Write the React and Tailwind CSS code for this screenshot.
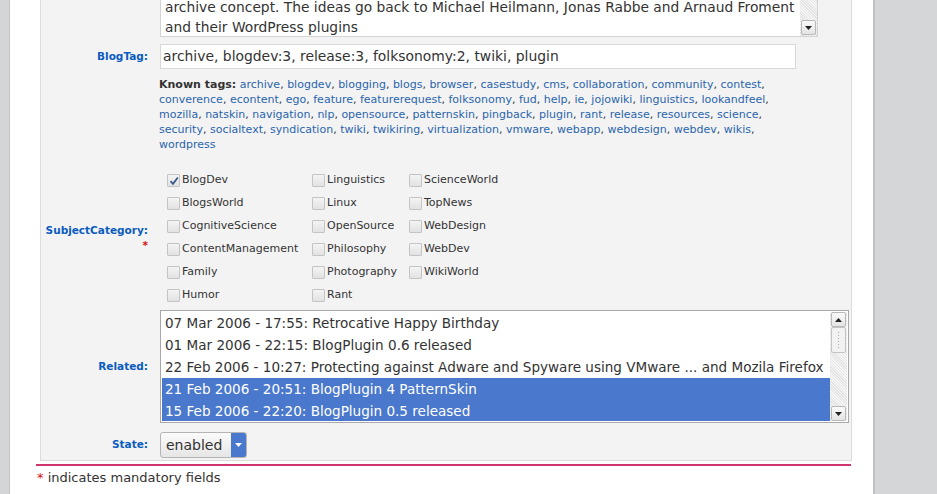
import React from "react";

const tags = [
  "archive", "blogdev", "blogging", "blogs", "browser", "casestudy", "cms", "collaboration", "community", "contest",
  "converence", "econtent", "ego", "feature", "featurerequest", "folksonomy", "fud", "help", "ie", "jojowiki", "linguistics", "lookandfeel",
  "mozilla", "natskin", "navigation", "nlp", "opensource", "patternskin", "pingback", "plugin", "rant", "release", "resources", "science",
  "security", "socialtext", "syndication", "twiki", "twikiring", "virtualization", "vmware", "webapp", "webdesign", "webdev", "wikis",
  "wordpress",
];

const categories = [
  ["BlogDev", "Linguistics", "ScienceWorld"],
  ["BlogsWorld", "Linux", "TopNews"],
  ["CognitiveScience", "OpenSource", "WebDesign"],
  ["ContentManagement", "Philosophy", "WebDev"],
  ["Family", "Photography", "WikiWorld"],
  ["Humor", "Rant", null],
];

const related = [
  { text: "07 Mar 2006 - 17:55: Retrocative Happy Birthday" },
  { text: "01 Mar 2006 - 22:15: BlogPlugin 0.6 released" },
  { text: "22 Feb 2006 - 10:27: Protecting against Adware and Spyware using VMware ... and Mozila Firefox" },
  { text: "21 Feb 2006 - 20:51: BlogPlugin 4 PatternSkin", sel: true },
  { text: "15 Feb 2006 - 22:20: BlogPlugin 0.5 released", sel: true },
];

const label = "text-right font-bold text-[10.5px] text-[#0a5cbf] pr-3 font-['DejaVu_Sans',sans-serif]";

function Checkbox({ checked }) {
  return (
    <span className="w-[13px] h-[13px] mr-[2px] border border-[#c4c4c4] rounded-[1px] bg-gradient-to-b from-[#f4f4f4] to-[#e2e2e2] flex items-center justify-center shrink-0">
      {checked && (
        <svg width="10" height="10" viewBox="0 0 10 10">
          <path d="M1.5 5.2 L4 7.8 L8.8 1.5" fill="none" stroke="#3a5a8c" strokeWidth="1.8" />
        </svg>
      )}
    </span>
  );
}

function ScrollArrow({ down }) {
  return (
    <div className="w-[15px] h-[15px] border border-[#b8b8b8] rounded-[2px] bg-gradient-to-b from-[#fafafa] to-[#e4e4e4] flex items-center justify-center">
      <svg width="7" height="4" viewBox="0 0 7 4">
        <path d={down ? "M0 0 L7 0 L3.5 4 Z" : "M0 4 L7 4 L3.5 0 Z"} fill="#222" />
      </svg>
    </div>
  );
}

export default function App() {
  return (
    <div className="w-[937px] h-[494px] overflow-hidden flex bg-white font-['DejaVu_Sans',sans-serif] text-[#333]">
      {/* left edge */}
      <div className="w-[10px] bg-[#d4d5d7] border-r border-[#c2c3c5]" />

      <div className="w-[863px] pl-[26px] pr-[21px] flex flex-col">
        <div className="ml-[4px] border border-t-0 border-[#dcdcdc] bg-[#f3f3f3] pb-[2px]">
          {/* textarea */}
          <div className="flex">
            <div className={`${label} w-[119px]`} />
            <div className="w-[658px] h-[37px] bg-white border border-t-0 border-[#d4d4d4] flex overflow-hidden">
              <div className="flex-1 pl-[4px] text-[13.8px] leading-[20px] -mt-[3px] whitespace-nowrap">
                <div>archive concept. The ideas go back to Michael Heilmann, Jonas Rabbe and Arnaud Froment</div>
                <div>and their WordPress plugins</div>
              </div>
              <div className="w-[17px] bg-[repeating-linear-gradient(45deg,#e4e4e4_0,#e4e4e4_1px,#f6f6f6_1px,#f6f6f6_2px)] flex flex-col justify-end items-center pb-[1px]">
                <ScrollArrow down />
              </div>
            </div>
          </div>

          {/* BlogTag */}
          <div className="flex items-center mt-[7px]">
            <div className={`${label} w-[119px]`}>BlogTag:</div>
            <div className="w-[636px] h-[25px] bg-white border border-[#d8d8d8] pl-[2px] text-[13.9px] leading-[23px] whitespace-nowrap">
              archive, blogdev:3, release:3, folksonomy:2, twiki, plugin
            </div>
          </div>

          {/* known tags */}
          <div className="flex mt-[8px]">
            <div className="w-[118px]" />
            <div className="w-[640px] text-[11px] leading-[15px]">
              <span className="font-bold text-[#333]">Known tags:</span>{" "}
              {tags.map((t, i) => (
                <span key={t}>
                  <a className="text-[#2a65ad]">{t}</a>
                  {i < tags.length - 1 ? ", " : ""}
                </span>
              ))}
            </div>
          </div>

          {/* SubjectCategory */}
          <div className="flex items-center mt-[17px]">
            <div className={`${label} w-[119px] leading-[15px]`}>
              <div>SubjectCategory:</div>
              <div className="text-[#d01010]">*</div>
            </div>
            <div className="pl-[7px] grid grid-cols-[145px_97px_100px] text-[11px]">
              {categories.flat().map((c, i) =>
                c ? (
                  <div key={i} className="h-[23px] flex items-center">
                    <Checkbox checked={c === "BlogDev"} />
                    <span>{c}</span>
                  </div>
                ) : (
                  <div key={i} />
                )
              )}
            </div>
          </div>

          {/* Related */}
          <div className="flex items-center mt-[3px]">
            <div className={`${label} w-[119px]`}>Related:</div>
            <div className="w-[689px] h-[113px] bg-white border border-[#a8a8a8] flex p-[1px]">
              <div className="flex-1 text-[13.55px] leading-[22px] whitespace-nowrap overflow-hidden">
                {related.map((r) => (
                  <div key={r.text} className={r.sel ? "bg-[#4a78cc] text-white pl-[3px]" : "pl-[3px]"}>
                    {r.text}
                  </div>
                ))}
              </div>
              <div className="w-[17px] flex flex-col items-center bg-[repeating-linear-gradient(45deg,#e4e4e4_0,#e4e4e4_1px,#f6f6f6_1px,#f6f6f6_2px)]">
                <ScrollArrow />
                <div className="w-[15px] h-[26px] border border-[#c4c4c4] rounded-[2px] bg-[#f2f2f2] flex items-center justify-center">
                  <div className="w-[1px] h-[16px] bg-[repeating-linear-gradient(180deg,#aaa_0,#aaa_1px,transparent_1px,transparent_3px)]" />
                </div>
                <div className="flex-1" />
                <ScrollArrow down />
              </div>
            </div>
          </div>

          {/* State */}
          <div className="flex items-center mt-[9px]">
            <div className={`${label} w-[119px]`}>State:</div>
            <div className="w-[87px] h-[26px] border border-[#b4b4b4] rounded-[3px] bg-gradient-to-b from-[#fbfbfb] to-[#e6e6e6] flex overflow-hidden">
              <span className="flex-1 pl-[5px] text-[14px] leading-[24px]">enabled</span>
              <span className="w-[15px] bg-[#4a78cc] flex items-center justify-center">
                <svg width="7" height="4" viewBox="0 0 7 4">
                  <path d="M0 0 L7 0 L3.5 4 Z" fill="#fff" />
                </svg>
              </span>
            </div>
          </div>
        </div>

        <div className="h-[2px] bg-[#cf3670] mt-[3px] w-[815px]" />
        <div className="pl-[1px] mt-[4px] text-[13px] leading-[16px]">
          <span className="text-[#d01010]">*</span> indicates mandatory fields
        </div>
      </div>

      {/* right edge */}
      <div className="flex-1 bg-[#d5d6d8] border-l-2 border-[#bfc0c2]" />
    </div>
  );
}
